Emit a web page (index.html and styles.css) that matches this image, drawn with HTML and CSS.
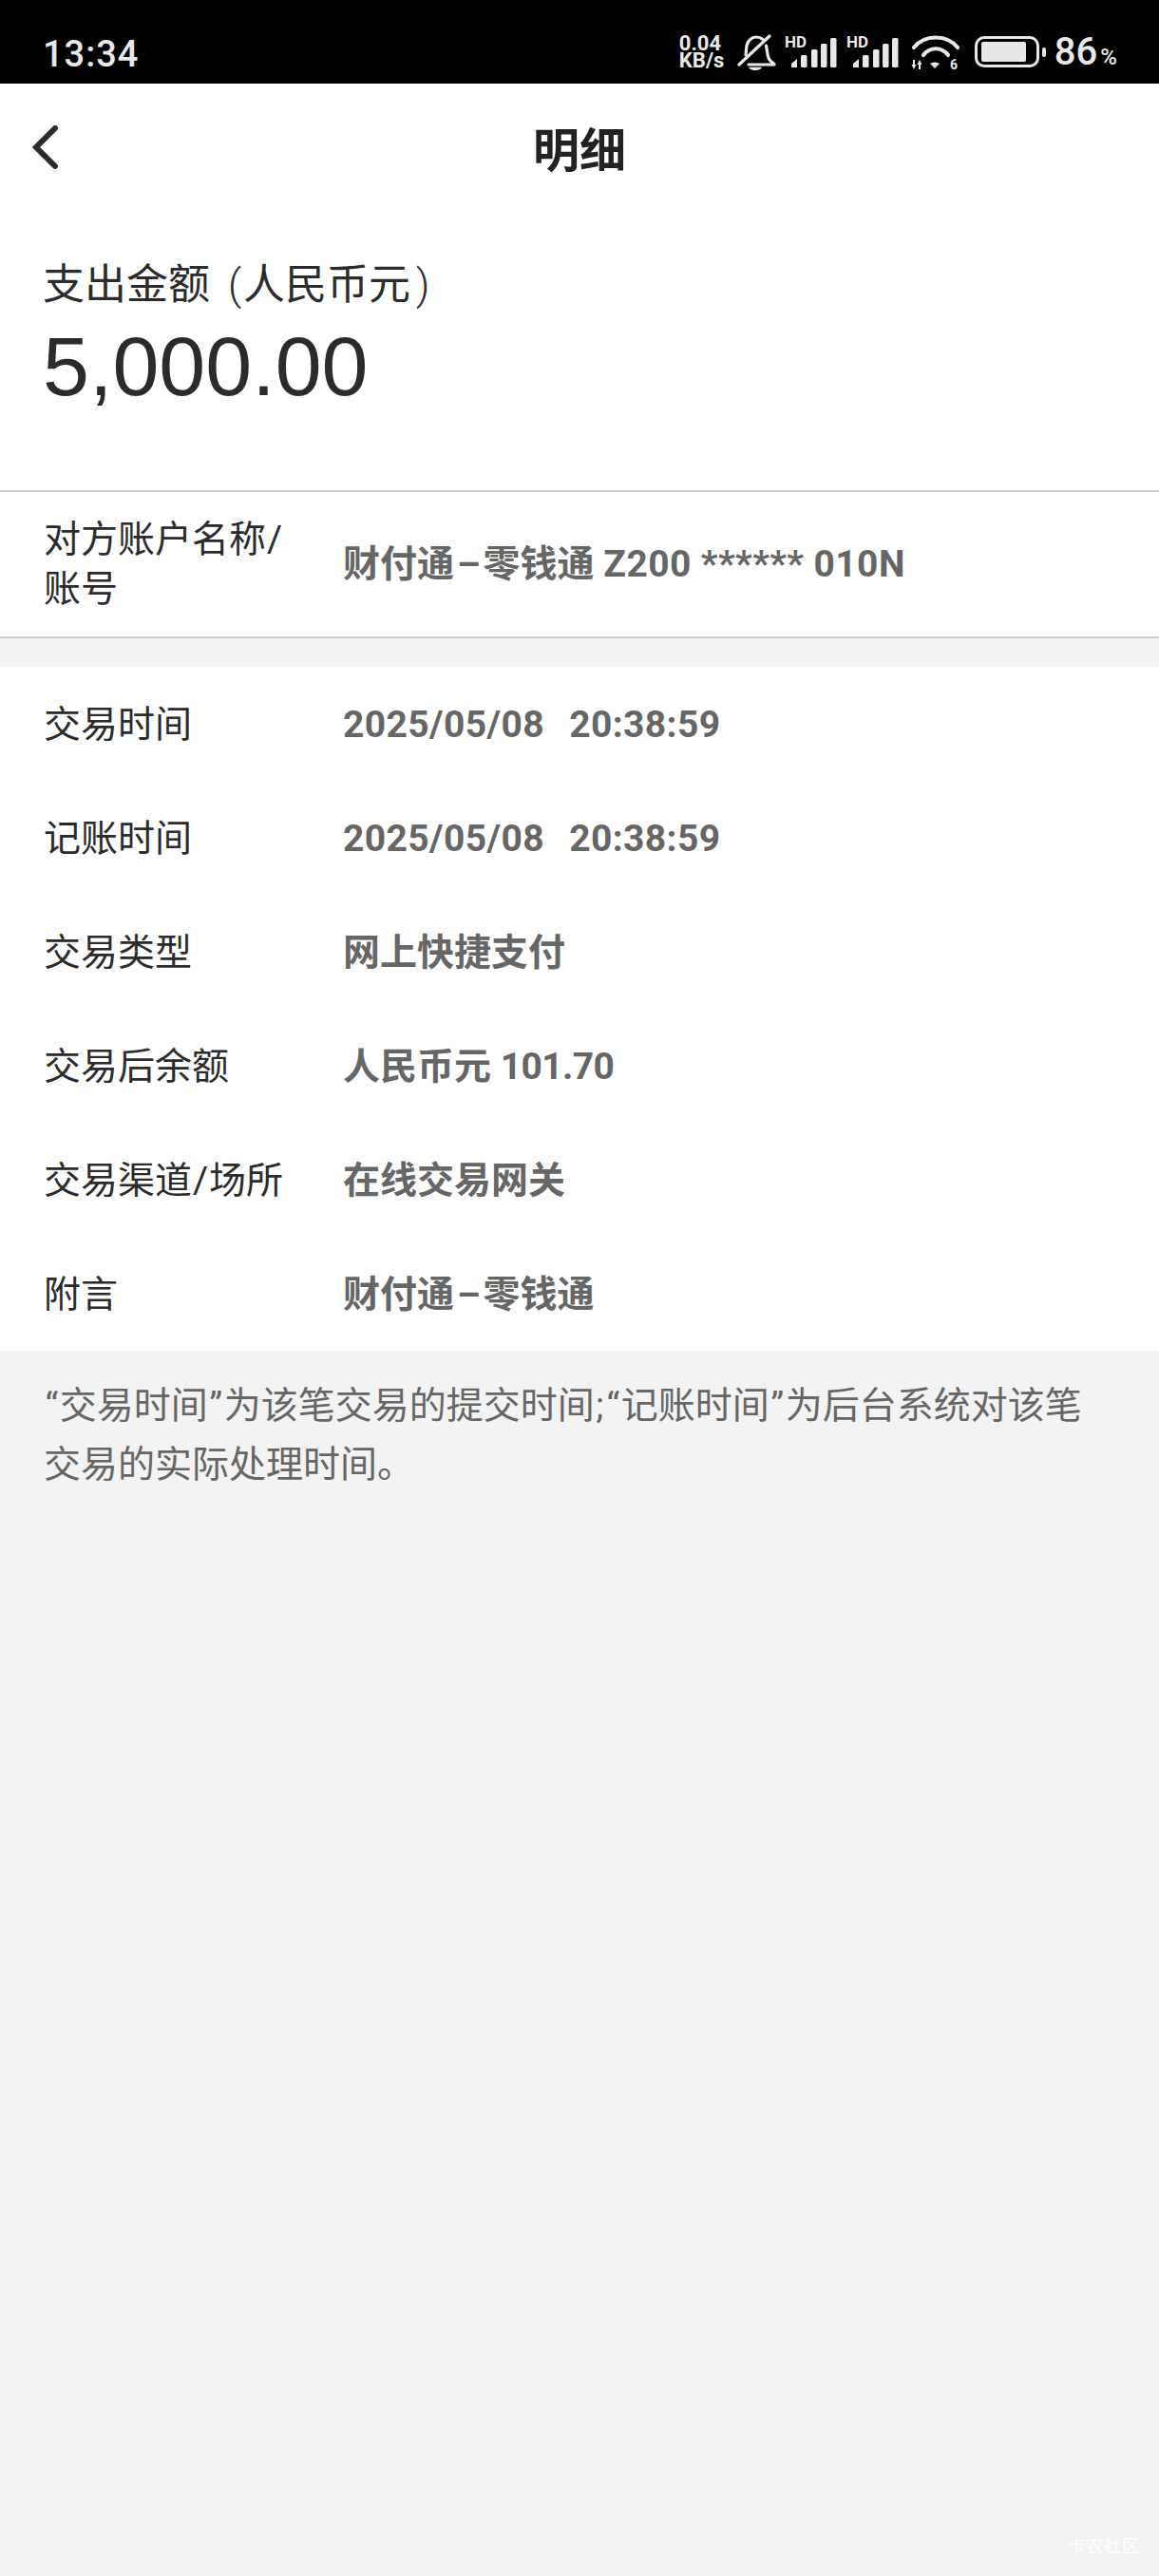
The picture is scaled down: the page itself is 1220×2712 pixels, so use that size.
FILE: index.html
```html
<!DOCTYPE html>
<html>
<head>
  <meta charset="UTF-8">
  <title>明细</title>
  <link rel="stylesheet" href="styles.css">
</head>
<body>
  <div class="status-bar">
    <span class="clock">13:34</span>
    <div class="status-icons">
      <span class="speed">0.04<br>KB/s</span>
      <svg class="bell" width="41" height="40" viewBox="0 0 41 40" fill="none" stroke="#e8e8e8" stroke-width="3.200" stroke-linecap="round" stroke-linejoin="round">
        <path d="M9 23c.5-4 .5-7 1-10 1-5 5-9 10-9 3 0 5 .8 7 2.500"/>
        <path d="M30.500 13c1 5 1 9 2.500 13 1 2.500 3 4.500 6 6.500v.5H12"/>
        <path d="M2 33 34 3"/>
        <path d="M13 36.500c3 2.500 9 2.500 12 0z" fill="#e8e8e8" stroke-width="1.500"/>
      </svg>
      <svg class="signal" width="55" height="33" viewBox="0 0 55 33">
        <text x="0" y="12" class="hd">HD</text>
        <g fill="#e8e8e8">
          <path d="M7 33v-4l6-5v9z"/>
          <rect x="17" y="20" width="6.500" height="13" rx="1.500"/>
          <rect x="28" y="14" width="6.500" height="19" rx="1.500"/>
          <rect x="38" y="8" width="6.500" height="25" rx="1.500"/>
          <rect x="48" y="2" width="6.500" height="31" rx="1.500"/>
        </g>
      </svg>
      <svg class="signal" width="55" height="33" viewBox="0 0 55 33">
        <text x="0" y="12" class="hd">HD</text>
        <g fill="#e8e8e8">
          <path d="M7 33v-4l6-5v9z"/>
          <rect x="17" y="20" width="6.500" height="13" rx="1.500"/>
          <rect x="28" y="14" width="6.500" height="19" rx="1.500"/>
          <rect x="38" y="8" width="6.500" height="25" rx="1.500"/>
          <rect x="48" y="2" width="6.500" height="31" rx="1.500"/>
        </g>
      </svg>
      <svg class="wifi" width="52" height="38" viewBox="0 0 52 38" fill="none" stroke="#e8e8e8" stroke-width="4.200" stroke-linecap="round">
        <path d="M3 14C14 0 38 0 49 14"/>
        <path d="M13 22C20 13 32 13 39 22"/>
        <g fill="#e8e8e8" stroke="none">
          <path d="M20 31Q25 28 30 31L25 36z"/>
          <path d="M.5 32H2v-5h2v5h1.500L3 37z"/>
          <path d="M6.500 32H8v5h2v-5h1.500L9 27z"/>
        </g>
        <text x="41" y="37" class="wifi-six">6</text>
      </svg>
      <div class="battery"><div class="battery-fill"></div></div>
      <div class="battery-nub"></div>
      <span class="percent">86<small>%</small></span>
    </div>
  </div>

  <div class="nav">
    <svg class="back" width="30" height="46" viewBox="0 0 30 46" fill="none" stroke="#2b2b2b" stroke-width="6" stroke-linecap="round" stroke-linejoin="miter">
      <path d="M25 3 5 23l20 20"/>
    </svg>
    <h1>明细</h1>
  </div>

  <div class="summary">
    <div class="summary-label">支出金额 <span class="paren-open">(</span>人民币元<span class="paren-close">)</span></div>
    <div class="amount">5,000.00</div>
  </div>

  <div class="row row-account">
    <div class="label">对方账户名称<span class="slash">/</span><br>账号</div>
    <div class="value">财付通<span class="dash">–</span>零钱通 <span class="code">Z200 ****** 010N</span></div>
  </div>

  <div class="details">
    <div class="row">
      <div class="label">交易时间</div>
      <div class="value date">2025/05/08&nbsp; 20:38:59</div>
    </div>
    <div class="row">
      <div class="label">记账时间</div>
      <div class="value date">2025/05/08&nbsp; 20:38:59</div>
    </div>
    <div class="row">
      <div class="label">交易类型</div>
      <div class="value">网上快捷支付</div>
    </div>
    <div class="row">
      <div class="label">交易后余额</div>
      <div class="value">人民币元 <span class="money">101.70</span></div>
    </div>
    <div class="row">
      <div class="label">交易渠道<span class="slash">/</span>场所</div>
      <div class="value">在线交易网关</div>
    </div>
    <div class="row">
      <div class="label">附言</div>
      <div class="value">财付通<span class="dash">–</span>零钱通</div>
    </div>
  </div>

  <p class="note"><span class="quote">“</span>交易时间<span class="quote">”</span>为该笔交易的提交时间<span class="quote">;</span><span class="quote">“</span>记账时间<span class="quote">”</span>为后台系统对该笔交易的实际处理时间。</p>

  <div class="watermark">卡农社区</div>
</body>
</html>
```

FILE: styles.css
```css
* {
  margin: 0;
  padding: 0;
  box-sizing: border-box;
}
html, body {
  height: 2712px;
  overflow: hidden;
}
body {
  position: relative;
  background: #f3f3f3;
  font-family: "Roboto", "Noto Sans CJK SC", sans-serif;
  color: #2b2b2b;
}

/* status bar */
.status-bar {
  display: flex;
  justify-content: space-between;
  align-items: center;
  height: 88px;
  padding: 21px 44px 0 45px;
  background: #000;
  color: #e8e8e8;
}
.clock {
  margin-top: 5px;
  font-size: 38px;
  font-weight: 500;
  line-height: 44px;
  letter-spacing: 1px;
}
.status-icons {
  display: flex;
  align-items: center;
}
.speed {
  width: 61px;
  font-size: 22px;
  font-weight: 700;
  line-height: 18px;
}
.bell {
  margin-right: 9px;
}
.signal {
  margin-right: 10px;
}
.hd {
  font-family: "Roboto", sans-serif;
  font-size: 17px;
  font-weight: 700;
  fill: #e8e8e8;
}
.wifi {
  margin: 0 15px 0 3px;
}
.wifi-six {
  font-family: "Roboto", sans-serif;
  font-size: 14px;
  font-weight: 700;
  fill: #e8e8e8;
  stroke: none;
}
.battery {
  width: 68px;
  height: 33px;
  padding: 3px 11px 3px 4px;
  border: 3px solid #e8e8e8;
  border-radius: 10px;
}
.battery-fill {
  height: 100%;
  background: #e8e8e8;
  border-radius: 2px;
}
.battery-nub {
  width: 4px;
  height: 10px;
  margin: 0 9px 0 3px;
  background: #e8e8e8;
  border-radius: 2px;
}
.percent {
  font-size: 40px;
  font-weight: 500;
  line-height: 1;
}
.percent small {
  margin-left: 3px;
  font-size: 24px;
}

/* title */
.nav {
  position: relative;
  display: flex;
  align-items: center;
  justify-content: center;
  height: 138px;
  padding-bottom: 5px;
  background: #fff;
}
.nav h1 {
  font-size: 49px;
  font-weight: 700;
  color: #222;
}
.back {
  position: absolute;
  left: 33px;
  top: 44px;
}

/* amount */
.summary {
  height: 290px;
  padding: 42px 45px 0;
  background: #fff;
}
.summary-label {
  font-size: 44px;
  line-height: 64px;
  white-space: nowrap;
}
.paren-open {
  margin: 0 2px 0 8px;
  font-weight: 300;
}
.paren-close {
  margin-left: 6px;
  font-weight: 300;
}
.amount {
  margin-top: 4px;
  font-family: "Liberation Sans", sans-serif;
  font-size: 88px;
  line-height: 100px;
}

/* rows */
.row {
  display: flex;
  align-items: center;
  height: 120px;
  padding: 2px 0 0 46px;
  background: #fff;
}
.row-account {
  height: 156px;
  padding-top: 0;
  border-top: 2px solid #ccc;
  border-bottom: 2px solid #ccc;
}
.details {
  margin-top: 30px;
}
.label {
  flex: none;
  width: 315px;
  font-size: 39px;
  line-height: 52px;
}
.slash {
  margin: 0 1px;
}
.value {
  font-size: 39px;
  font-weight: 700;
  line-height: 52px;
  color: #666;
  white-space: nowrap;
}
.dash {
  margin: 0 3px;
}
.code {
  letter-spacing: .4px;
}
.date {
  letter-spacing: .4px;
  word-spacing: 3px;
}
.money {
  letter-spacing: -.6px;
}
.note {
  padding: 27px 47px 0 46px;
  font-size: 39px;
  line-height: 62px;
  color: #666;
}
.quote {
  margin: 0 1.500px;
}

/* corner mark */
.watermark {
  position: absolute;
  right: 20px;
  bottom: 20px;
  font-size: 18px;
  letter-spacing: 1px;
  color: #fff;
}
```
